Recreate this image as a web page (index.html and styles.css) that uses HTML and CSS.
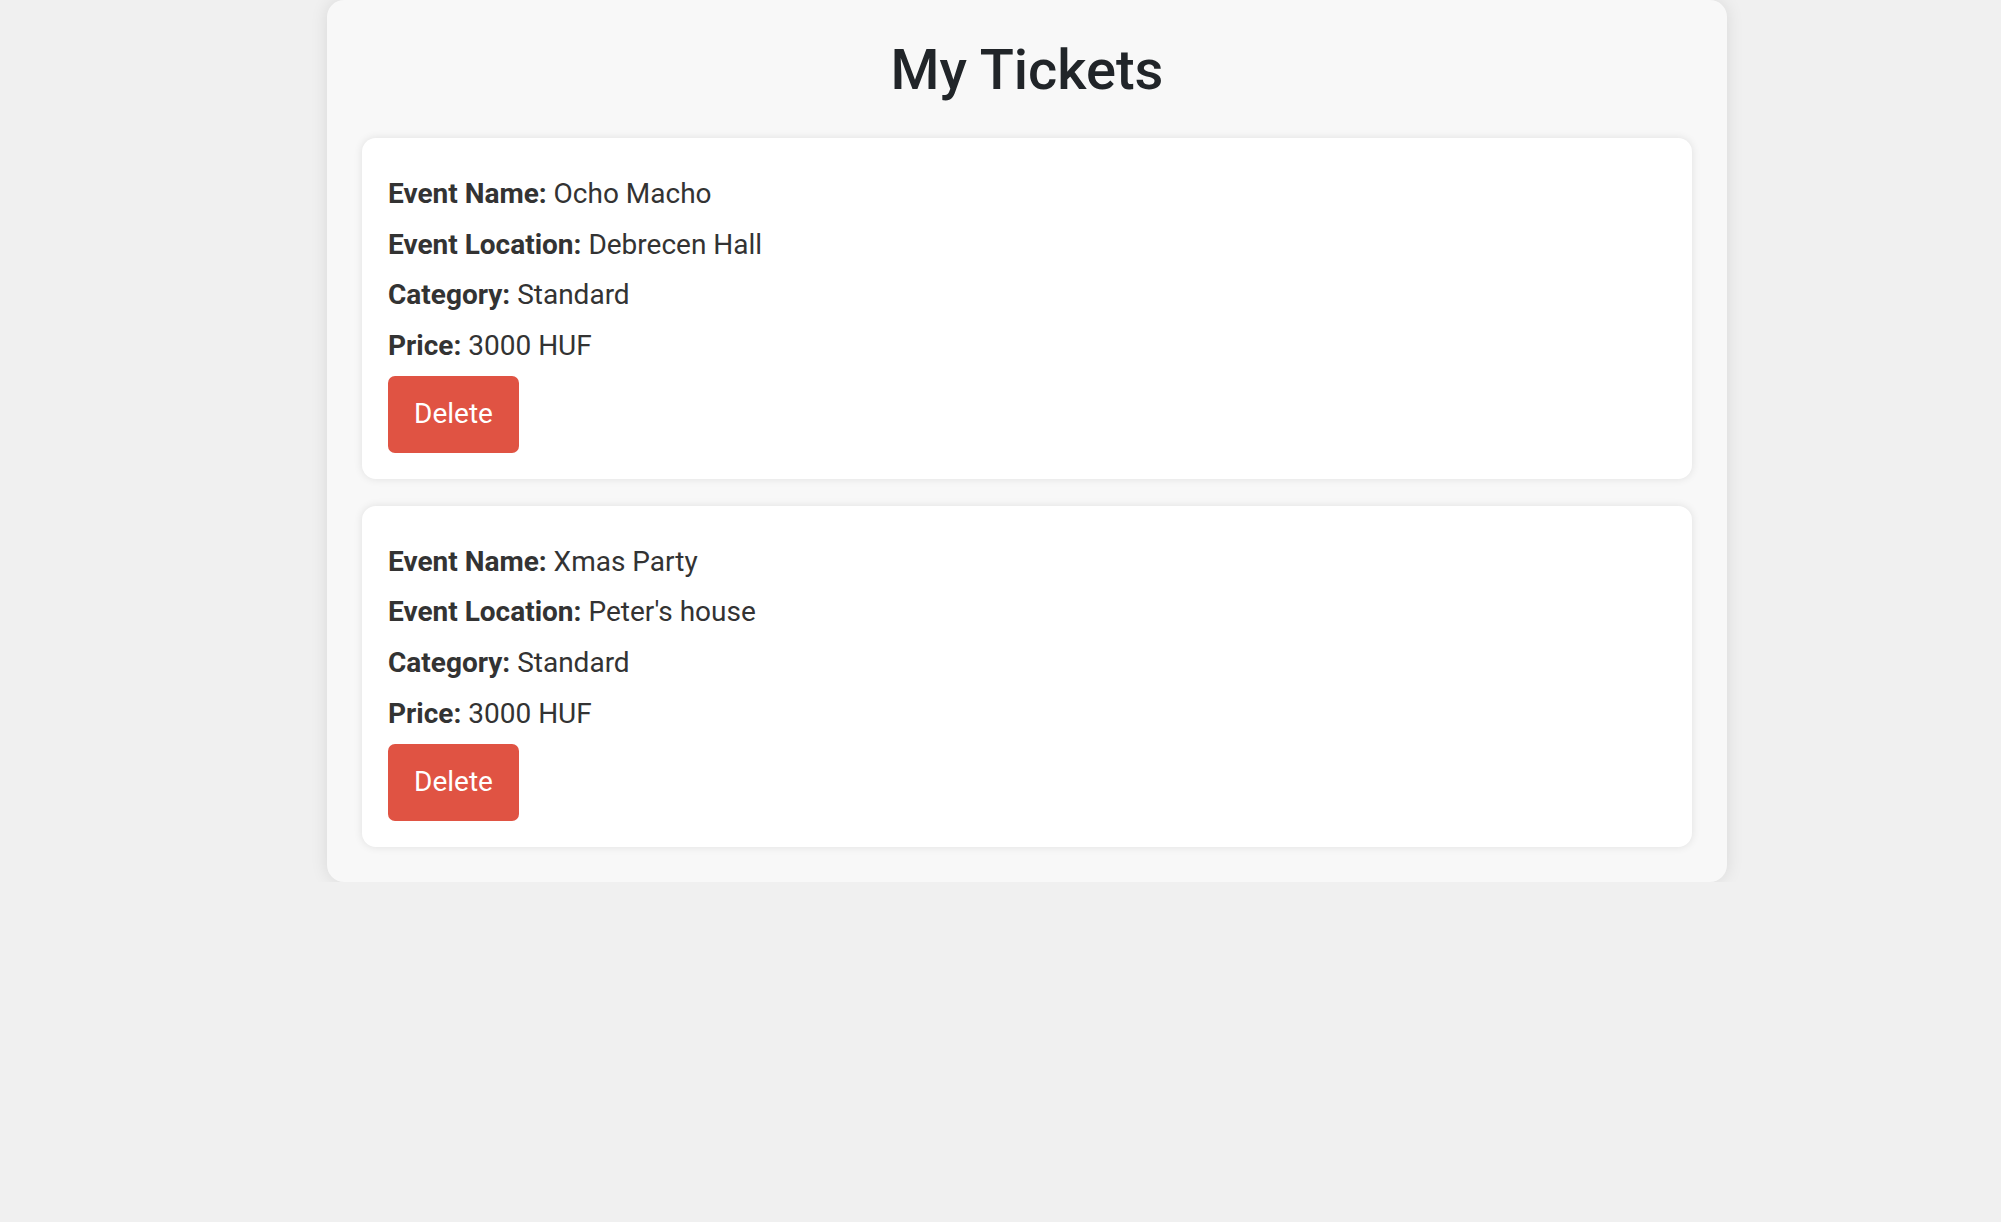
FILE: index.html
```html
<!DOCTYPE html>
<html lang="en">
<head>
<meta charset="utf-8">
<title>My Tickets</title>
<link rel="stylesheet" href="styles.css">
</head>
<body>
<main class="container">
  <h1 class="title">My Tickets</h1>
  <div class="ticket-list">
    <div class="ticket">
      <p><strong>Event Name:</strong> Ocho Macho</p>
      <p><strong>Event Location:</strong> Debrecen Hall</p>
      <p><strong>Category:</strong> Standard</p>
      <p><strong>Price:</strong> 3000 HUF</p>
      <button class="delete-btn">Delete</button>
    </div>
    <div class="ticket">
      <p><strong>Event Name:</strong> Xmas Party</p>
      <p><strong>Event Location:</strong> Peter's house</p>
      <p><strong>Category:</strong> Standard</p>
      <p><strong>Price:</strong> 3000 HUF</p>
      <button class="delete-btn">Delete</button>
    </div>
  </div>
</main>
</body>
</html>
```

FILE: styles.css
```css
html, body {
  margin: 0;
  padding: 0;
}

body {
  background: #f0f0f0;
  font-family: Roboto, "Liberation Sans", Arial, sans-serif;
  font-size: 28px;
  line-height: 1.5;
  color: #333333;
  padding-left: 53px;
}

.container {
  box-sizing: border-box;
  width: 1400px;
  margin: 0 auto;
  padding: 37px 35px 35px;
  background: #f8f8f8;
  border-radius: 17px;
  box-shadow: 0 0 17px rgba(0, 0, 0, 0.1);
}

.title {
  margin: 0 0 35px;
  text-align: center;
  font-size: 56px;
  font-weight: 500;
  line-height: normal;
  color: #212529;
}

.ticket-list {
  display: flex;
  flex-direction: column;
  gap: 27px;
}

.ticket {
  background: #ffffff;
  border-radius: 14px;
  padding: 26px;
  box-shadow: 0 0 9px rgba(0, 0, 0, 0.1);
}

.ticket p {
  margin: 8.75px 0;
}

.ticket strong {
  font-weight: 700;
}

.delete-btn {
  display: block;
  margin-top: 8.75px;
  padding: 17.5px 26px;
  border: none;
  border-radius: 7px;
  background: #e05343;
  color: #ffffff;
  font-family: Roboto, "Liberation Sans", Arial, sans-serif;
  font-size: 28px;
  line-height: 1.5;
  cursor: pointer;
}
```
